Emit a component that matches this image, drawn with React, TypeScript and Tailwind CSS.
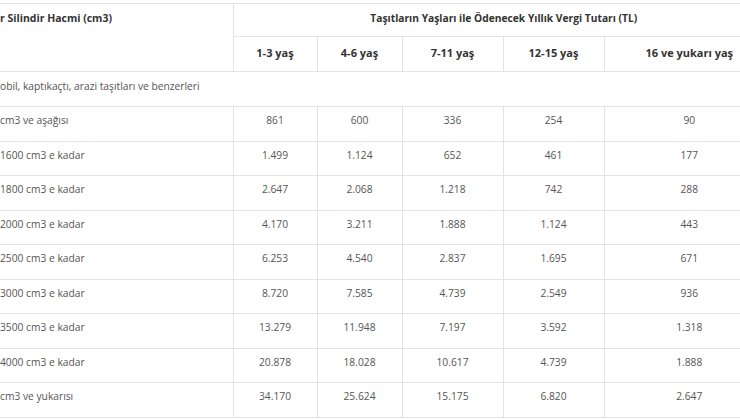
const AGES = ["1-3 yaş", "4-6 yaş", "7-11 yaş", "12-15 yaş", "16 ve yukarı yaş"];

const ROWS = [
  { label: "cm3 ve aşağısı", values: ["861", "600", "336", "254", "90"] },
  { label: "1600 cm3 e kadar", values: ["1.499", "1.124", "652", "461", "177"] },
  { label: "1800 cm3 e kadar", values: ["2.647", "2.068", "1.218", "742", "288"] },
  { label: "2000 cm3 e kadar", values: ["4.170", "3.211", "1.888", "1.124", "443"] },
  { label: "2500 cm3 e kadar", values: ["6.253", "4.540", "2.837", "1.695", "671"] },
  { label: "3000 cm3 e kadar", values: ["8.720", "7.585", "4.739", "2.549", "936"] },
  { label: "3500 cm3 e kadar", values: ["13.279", "11.948", "7.197", "3.592", "1.318"] },
  { label: "4000 cm3 e kadar", values: ["20.878", "18.028", "10.617", "4.739", "1.888"] },
  { label: "cm3 ve yukarısı", values: ["34.170", "25.624", "15.175", "6.820", "2.647"] },
];

export default function App() {
  return (
    <div className="w-[740px] h-[420px] overflow-hidden bg-white pt-[3px] font-['Open_Sans',sans-serif] text-[10.25px] text-[#555]">
      <table className="table-fixed border-collapse w-[774px]">
        <colgroup>
          <col className="w-[233px]" />
          <col className="w-[84px]" />
          <col className="w-[85px]" />
          <col className="w-[101px]" />
          <col className="w-[101px]" />
          <col className="w-[170px]" />
        </colgroup>
        <thead className="text-[#333]">
          <tr className="h-[33px] border-t border-[#e3e3e3]">
            <th rowSpan={2} className="align-top pt-[7px] pl-0 text-left text-[10.5px] font-bold border-b border-[#e3e3e3]">
              r Silindir Hacmi (cm3)
            </th>
            <th colSpan={5} className="pb-[2px] text-[10.25px] font-bold border-l border-b border-[#e3e3e3]">
              Taşıtların Yaşları ile Ödenecek Yıllık Vergi Tutarı (TL)
            </th>
          </tr>
          <tr className="h-[35px] text-[11px]">
            {AGES.map((age) => (
              <th key={age} className="pb-[2px] font-bold border-l border-b border-[#e3e3e3]">
                {age}
              </th>
            ))}
          </tr>
        </thead>
        <tbody className="leading-[16px]">
          <tr className="h-[35px] border-b border-[#e3e3e3]">
            <td colSpan={6} className="align-top pt-[6px] pl-0 text-left">
              obil, kaptıkaçtı, arazi taşıtları ve benzerleri
            </td>
          </tr>
          {ROWS.map((row) => (
            <tr key={row.label} className="h-[34.5px] border-b border-[#e3e3e3]">
              <td className="align-top pt-[5px] pl-0 text-left">{row.label}</td>
              {row.values.map((v, i) => (
                <td key={i} className="align-top pt-[5px] text-center border-l border-[#e3e3e3]">
                  {v}
                </td>
              ))}
            </tr>
          ))}
        </tbody>
      </table>
    </div>
  );
}
